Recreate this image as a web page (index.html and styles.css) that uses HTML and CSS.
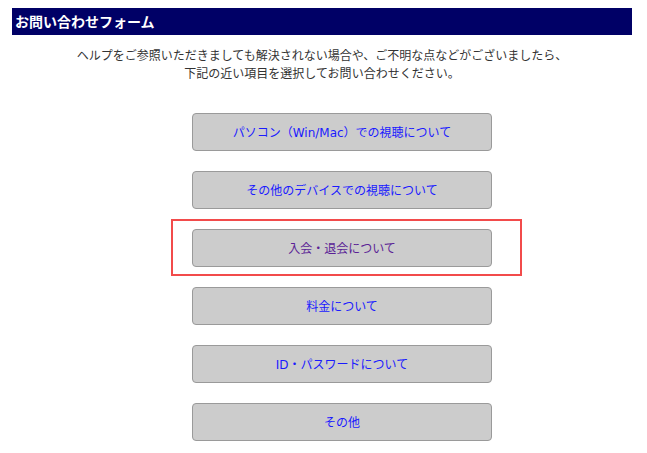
FILE: index.html
```html
<!DOCTYPE html>
<html lang="ja">
<head>
<meta charset="utf-8">
<title>お問い合わせフォーム</title>
<link rel="stylesheet" href="styles.css">
</head>
<body>
<div class="page">
  <h1 class="title">お問い合わせフォーム</h1>
  <p class="intro">ヘルプをご参照いただきましても解決されない場合や、ご不明な点などがございましたら、<br>下記の近い項目を選択してお問い合わせください。</p>
  <ul class="menu">
    <li><a class="btn" href="#pc">パソコン（Win/Mac）での視聴について</a></li>
    <li><a class="btn" href="#device">その他のデバイスでの視聴について</a></li>
    <li class="marked"><a class="btn visited" href="#join">入会・退会について</a><span class="highlight"></span></li>
    <li><a class="btn" href="#fee">料金について</a></li>
    <li><a class="btn" href="#id">ID・パスワードについて</a></li>
    <li><a class="btn" href="#other">その他</a></li>
  </ul>
</div>
</body>
</html>
```

FILE: styles.css
```css
html, body {
  margin: 0;
  padding: 0;
  background: #ffffff;
}

body {
  font-family: "DejaVu Sans", "Noto Sans CJK JP", sans-serif;
  font-size: 12px;
  color: #333333;
}

.page {
  padding: 8px 15px 0 12px;
}

.title {
  margin: 0;
  height: 27px;
  line-height: 27px;
  padding-left: 3px;
  background: #000066;
  color: #ffffff;
  font-family: "Noto Sans CJK JP", sans-serif;
  font-size: 14px;
  font-weight: bold;
}

.intro {
  margin: 11px 0 0;
  text-align: center;
  line-height: 18px;
  font-family: "Noto Sans CJK JP", sans-serif;
  font-size: 12px;
  color: #333333;
}

.menu {
  list-style: none;
  margin: 31px 0 0;
  padding: 0 0 0 40px;
  display: flex;
  flex-direction: column;
  align-items: center;
  gap: 20px;
}

.menu li {
  position: relative;
}

.btn {
  display: flex;
  align-items: center;
  justify-content: center;
  box-sizing: border-box;
  width: 300px;
  height: 38px;
  padding-bottom: 2px;
  background: #cccccc;
  border: 1px solid #9a9a9a;
  border-radius: 4px;
  color: #1a1aff;
  text-decoration: none;
  font-size: 12px;
}

.btn.visited {
  color: #5b1f96;
}

.highlight {
  position: absolute;
  left: -21px;
  right: -30px;
  top: -10px;
  bottom: -9px;
  border: 2px solid #f24b4b;
  pointer-events: none;
}
```
